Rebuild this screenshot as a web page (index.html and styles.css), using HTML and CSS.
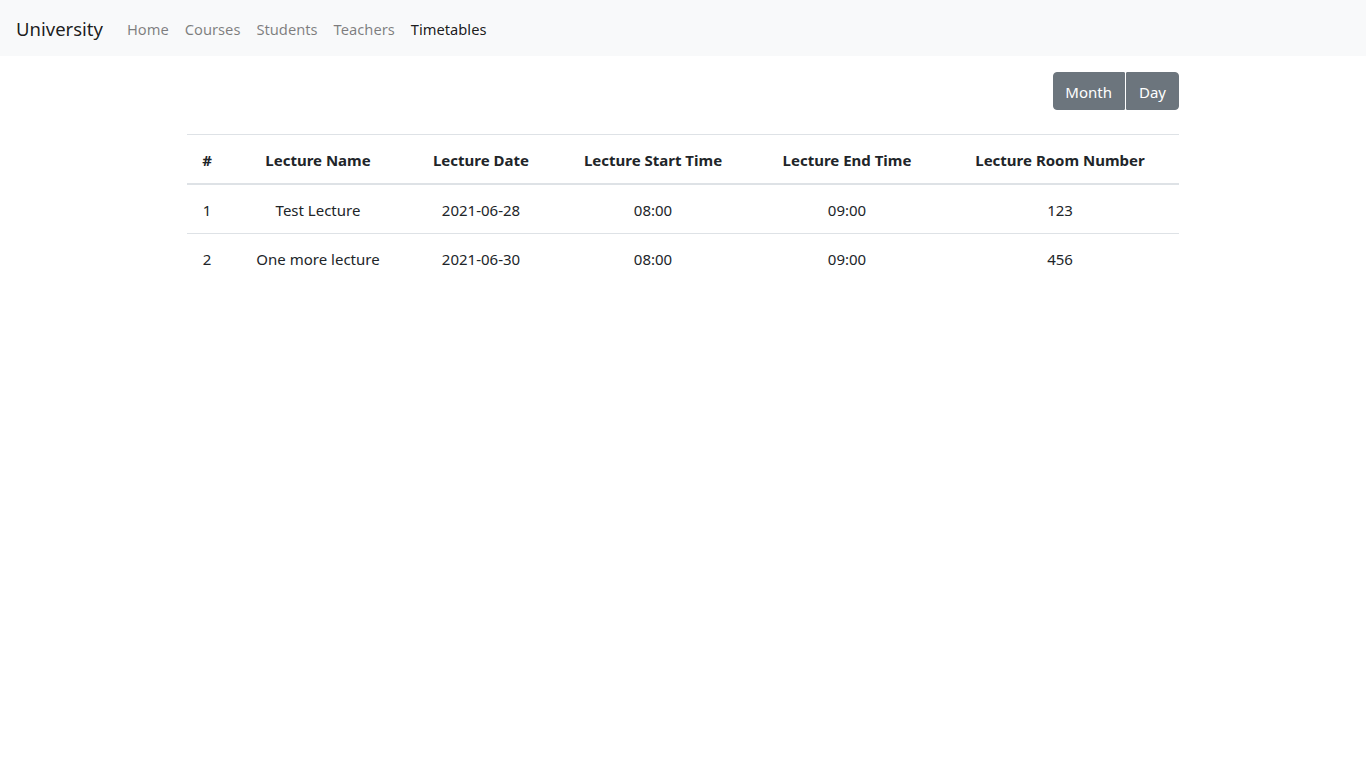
FILE: index.html
```html
<!DOCTYPE html>
<html lang="en">
<head>
<meta charset="utf-8">
<title>Timetables</title>
<link rel="stylesheet" href="styles.css">
</head>
<body>
<nav class="navbar">
  <a class="brand" href="#">University</a>
  <ul class="nav">
    <li><a class="nav-link" href="#">Home</a></li>
    <li><a class="nav-link" href="#">Courses</a></li>
    <li><a class="nav-link" href="#">Students</a></li>
    <li><a class="nav-link" href="#">Teachers</a></li>
    <li><a class="nav-link active" href="#">Timetables</a></li>
  </ul>
</nav>
<main class="content">
  <div class="toolbar">
    <div class="btn-group">
      <button class="btn btn-first">Month</button>
      <button class="btn btn-last">Day</button>
    </div>
  </div>
  <table class="table">
    <thead>
      <tr>
        <th>#</th>
        <th>Lecture Name</th>
        <th>Lecture Date</th>
        <th>Lecture Start Time</th>
        <th>Lecture End Time</th>
        <th>Lecture Room Number</th>
      </tr>
    </thead>
    <tbody>
      <tr>
        <td>1</td>
        <td>Test Lecture</td>
        <td>2021-06-28</td>
        <td>08:00</td>
        <td>09:00</td>
        <td>123</td>
      </tr>
      <tr>
        <td>2</td>
        <td>One more lecture</td>
        <td>2021-06-30</td>
        <td>08:00</td>
        <td>09:00</td>
        <td>456</td>
      </tr>
    </tbody>
  </table>
</main>
</body>
</html>
```

FILE: styles.css
```css
* { box-sizing: border-box; }
html, body {
  margin: 0;
  padding: 0;
  background: #fff;
}
body {
  font-family: "Noto Sans", "Open Sans", sans-serif;
  font-size: 15px;
  line-height: 24px;
  color: #212529;
}
.navbar {
  height: 56px;
  background: #f8f9fa;
  display: flex;
  align-items: center;
  padding: 0 16px;
}
.brand {
  font-size: 18.5px;
  line-height: 30px;
  color: rgba(0,0,0,.9);
  text-decoration: none;
  margin-right: 16px;
  padding-top: 2px;
}
.nav {
  list-style: none;
  margin: 0;
  padding: 0;
  display: flex;
}
.nav-link {
  display: block;
  padding: 9px 8px 7px;
  font-size: 14.7px;
  color: rgba(0,0,0,.5);
  text-decoration: none;
}
.nav-link.active { color: rgba(0,0,0,.9); }
.content {
  width: 992px;
  margin: 0 auto;
}
.toolbar {
  display: flex;
  justify-content: flex-end;
  padding-top: 16px;
  margin-bottom: 24px;
}
.btn-group { display: flex; }
.btn {
  font-family: inherit;
  font-size: 15px;
  line-height: 24px;
  height: 38px;
  padding: 7px 12px 5px;
  border: 1px solid #6c757d;
  background: #6c757d;
  color: #fff;
  cursor: pointer;
}
.btn-first { border-radius: 4px 1px 1px 4px; padding-left: 11px; padding-right: 12px; }
.btn-last { border-radius: 1px 4px 4px 1px; margin-left: 1px; }
.table {
  width: 100%;
  border-collapse: collapse;
  table-layout: fixed;
}
.table th, .table td {
  padding: 13px 12px 11px;
  text-align: center;
  border-top: 1px solid #dee2e6;
  vertical-align: top;
  white-space: nowrap;
}
.table th {
  font-weight: 700;
  border-bottom: 2px solid #dee2e6;
}
.table th:nth-child(1) { width: 40px; }
.table th:nth-child(2) { width: 182px; }
.table th:nth-child(3) { width: 144px; }
.table th:nth-child(4) { width: 200px; }
.table th:nth-child(5) { width: 188px; }
.table th:nth-child(6) { width: 238px; }
```
